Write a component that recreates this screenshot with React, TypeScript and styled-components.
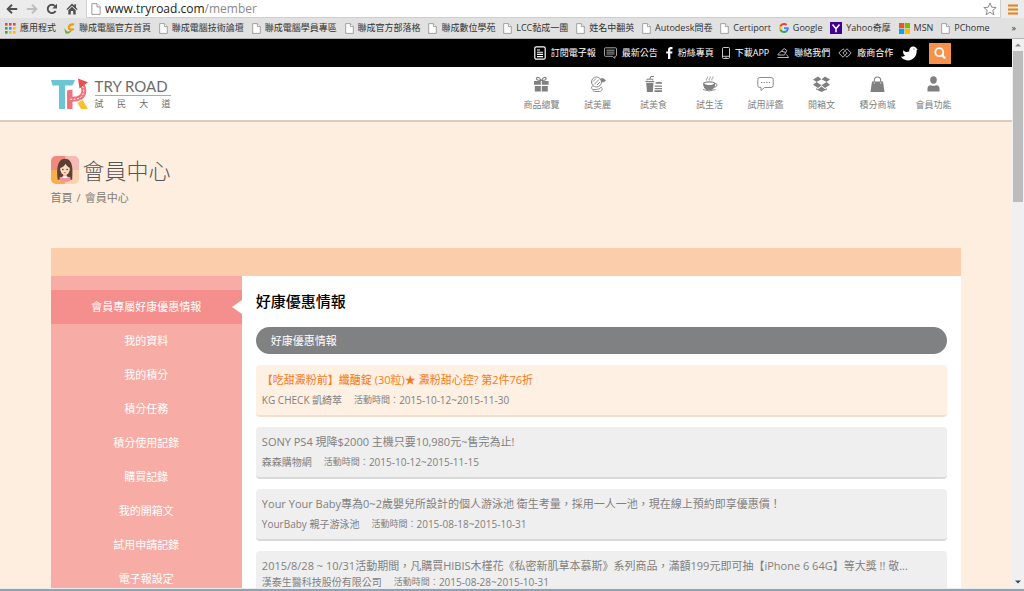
import React from "react";
import styled, { createGlobalStyle } from "styled-components";

const GlobalStyle = createGlobalStyle`
  * { box-sizing: border-box; }
  html, body { margin: 0; padding: 0; }
  body {
    font-family: "Open Sans", "Noto Sans CJK TC", sans-serif;
    background: #fff;
    color: #7f7f7f;
  }
  a { color: inherit; text-decoration: none; }
  ul { list-style: none; margin: 0; padding: 0; }
  button { border: 0; padding: 0; background: none; font: inherit; color: inherit; }
  svg { display: block; flex: none; }
`;

const Window = styled.div`
  display: flex;
  flex-direction: column;
  height: 100vh;
  overflow: hidden;
`;

/* ---------- browser chrome ---------- */

const Toolbar = styled.div`
  display: flex;
  flex: none;
  height: 18px;
  background: #ececec;
`;

const NavButtons = styled.div`
  display: flex;
  align-items: center;
  gap: 8px;
  padding: 0 8px 1px 6px;
`;

const AddressBar = styled.form`
  display: flex;
  align-items: center;
  flex: 1;
  gap: 4px;
  padding: 0 3px 0 4px;
  background: #fff;
  border: 1px solid #cfcfcf;
  border-top: 0;
`;

const AddressText = styled.label`
  position: relative;
  flex: 1;
  height: 17px;
  font-size: 12px;
  line-height: 17px;
  color: #8a8a8a;
`;

const AddressInput = styled.input`
  position: absolute;
  inset: 0;
  width: 100%;
  padding: 0;
  border: 0;
  outline: 0;
  background: transparent;
  color: transparent;
  font: inherit;
`;

const Host = styled.span`
  color: #222;
`;

const MenuButton = styled.button`
  width: 23px;
  display: flex;
  align-items: center;
  justify-content: center;
`;

const Bookmarks = styled.nav`
  display: flex;
  flex: none;
  align-items: center;
  justify-content: space-between;
  height: 21px;
  padding: 0 8px 0 5px;
  background: #e1e1e1;
  border-bottom: 1px solid #b5b5b5;
  overflow: hidden;
`;

const Bookmark = styled.a`
  display: flex;
  align-items: center;
  gap: 4px;
  font-size: 9px;
  line-height: 20px;
  white-space: nowrap;
  color: #333;
`;

const MoreBookmarks = styled.button`
  margin-left: 14px;
  font-size: 9px;
  line-height: 20px;
  color: #333;
`;

/* ---------- page frame ---------- */

const Viewport = styled.div`
  display: flex;
  flex: 1;
  min-height: 0;
`;

const Page = styled.div`
  flex: 1;
  min-width: 0;
  overflow: hidden;
  background: #feeee0;
`;

const Scrollbar = styled.div`
  display: flex;
  flex-direction: column;
  align-items: center;
  justify-content: space-between;
  width: 12px;
  padding: 4px 0;
  background: #f0f0f0;
`;

const Thumb = styled.div`
  width: 10px;
  height: 28%;
  margin: 4px 0 auto;
  background: #bcbcbc;
`;

const Taskbar = styled.div`
  flex: none;
  height: 3px;
  border-top: 1px solid #e8ecef;
  background: #8fa3b4;
`;

/* ---------- site header ---------- */

const UtilityBar = styled.nav`
  display: flex;
  align-items: center;
  justify-content: flex-end;
  gap: 8px;
  height: 28px;
  padding: 0 6%;
  background: #000;
  color: #fff;
`;

const UtilityLink = styled.a`
  display: flex;
  align-items: center;
  gap: 5px;
  font-size: 9px;
  line-height: 12px;
  white-space: nowrap;
`;

const SearchButton = styled.button`
  display: flex;
  align-items: center;
  justify-content: center;
  width: 22px;
  height: 21px;
  margin-left: 3px;
  background: #f8914a;
`;

const SiteHeader = styled.header`
  display: flex;
  align-items: center;
  justify-content: space-between;
  height: 55px;
  padding: 0 5%;
  background: #fff;
  border-bottom: 2px solid #d8cdc3;
`;

const Brand = styled.a`
  display: flex;
  align-items: center;
  gap: 6px;
`;

const BrandText = styled.span`
  display: flex;
  flex-direction: column;
  width: 76px;
`;

const BrandName = styled.span`
  font-family: Lato, sans-serif;
  font-size: 15px;
  line-height: 18px;
  color: #6c6c6c;
  white-space: nowrap;
  border-bottom: 1px solid #aaa;
`;

const BrandSub = styled.span`
  display: flex;
  justify-content: space-between;
  padding-top: 2px;
  font-size: 9px;
  line-height: 12px;
  color: #6c6c6c;
`;

const MainNav = styled.nav`
  display: flex;
`;

const MainNavLink = styled.a`
  display: flex;
  flex-direction: column;
  align-items: center;
  gap: 5px;
  width: 56px;
  font-size: 9px;
  line-height: 14px;
  white-space: nowrap;
  color: #808080;
`;

/* ---------- member centre ---------- */

const Content = styled.main`
  padding: 32px 5% 0;
`;

const TitleRow = styled.div`
  display: flex;
  align-items: center;
  gap: 4px;
`;

const PageTitle = styled.h1`
  margin: 0;
  font-size: 22px;
  font-weight: 300;
  line-height: 32px;
  color: #555;
`;

const Breadcrumb = styled.nav`
  display: flex;
  gap: 4px;
  margin: 3px 0 41px;
  font-size: 11px;
  line-height: 18px;
  color: #857c74;
`;

const Band = styled.div`
  height: 28px;
  background: #fccdab;
`;

const Columns = styled.div`
  display: flex;
  background: #fff;
`;

const SideMenu = styled.nav`
  flex: none;
  width: 21%;
  padding: 14px 0;
  background: #f8aca6;
`;

const SideLink = styled.a<{ $active?: boolean }>`
  display: block;
  position: relative;
  font-size: 11px;
  line-height: 34px;
  text-align: center;
  color: #fff;
  background: ${(p) => (p.$active ? "#f58f8d" : "transparent")};

  &::after {
    content: "";
    display: ${(p) => (p.$active ? "block" : "none")};
    position: absolute;
    right: 0;
    top: 10px;
    border: 7px solid transparent;
    border-left-width: 0;
    border-right: 10px solid #fff;
  }
`;

const Panel = styled.section`
  flex: 1;
  min-width: 0;
  padding: 14px;
`;

const PanelTitle = styled.h2`
  margin: 0 0 14px;
  font-size: 15px;
  font-weight: 500;
  line-height: 23px;
  color: #000;
`;

const Pill = styled.h3`
  margin: 0 0 11px;
  padding: 0 15px;
  border-radius: 14px;
  background: #808183;
  color: #fff;
  font-size: 11px;
  font-weight: 400;
  line-height: 27px;
`;

const Offers = styled.ul`
  display: flex;
  flex-direction: column;
  gap: 10px;
`;

const Offer = styled.li<{ $highlight?: boolean }>`
  height: 52px;
  padding: 5px 6px;
  border-radius: 4px;
  background: ${(p) => (p.$highlight ? "#fef0e3" : "#efefef")};
  border-bottom: 2px solid ${(p) => (p.$highlight ? "#f6dfc9" : "#d9d9d9")};
`;

const OfferTitle = styled.a<{ $highlight?: boolean }>`
  display: block;
  overflow: hidden;
  font-size: 11px;
  line-height: 20px;
  white-space: nowrap;
  text-overflow: ellipsis;
  color: ${(p) => (p.$highlight ? "#f47a20" : "#808080")};
`;

const OfferMeta = styled.div<{ $tight?: boolean }>`
  display: flex;
  align-items: center;
  gap: 12px;
  font-size: 10px;
  line-height: ${(p) => (p.$tight ? 12 : 20)}px;
  color: #808080;
`;

const Period = styled.span`
  display: flex;
`;

const PeriodLabel = styled.span`
  font-size: 9px;
`;

/* ---------- drawings ---------- */

const PageIcon = ({ size = 11 }: { size?: number }) => (
  <svg width={size - 2} height={size} viewBox="0 0 9 11" fill="#fff" stroke="#999" strokeWidth="0.9">
    <path d="M.7.6h4.8l2.8 2.8v7H.7z" />
    <path d="M5.4.6v3h2.9" />
  </svg>
);

const AppsIcon = () => (
  <svg width="11" height="11" viewBox="0 0 11 11">
    {["#e8453c", "#e8453c", "#e8453c", "#34a853", "#4285f4", "#fbbc05", "#34a853", "#fbbc05", "#fbbc05"].map((c, i) => (
      <rect key={i} x={(i % 3) * 4} y={Math.floor(i / 3) * 4} width="2.6" height="2.6" fill={c} />
    ))}
  </svg>
);

const LccIcon = () => (
  <svg width="11" height="11" viewBox="0 0 11 11" fill="none">
    <path d="M10 1.600C7 .6 4.600 2.500 4.900 5c.3 2 3 2.200 4.900.8" stroke="#f59b00" strokeWidth="2.200" />
    <path d="M.2 5l2.600 3.200c2 .6 4-.2 5.200-1.200C7 9.800 4.500 11 1.500 10.600z" fill="#63b32e" />
  </svg>
);

const GoogleIcon = () => (
  <svg width="10" height="10" viewBox="0 0 48 48">
    <path fill="#EA4335" d="M24 9.500c3.540 0 6.710 1.220 9.210 3.600l6.850-6.850C35.900 2.380 30.470 0 24 0 14.620 0 6.510 5.380 2.560 13.220l7.980 6.190C12.430 13.720 17.740 9.500 24 9.500z" />
    <path fill="#4285F4" d="M46.980 24.550c0-1.570-.15-3.090-.38-4.550H24v9.020h12.940c-.58 2.960-2.260 5.480-4.780 7.180l7.730 6c4.510-4.180 7.090-10.360 7.090-17.650z" />
    <path fill="#FBBC05" d="M10.530 28.590A14.500 14.500 0 0 1 9.770 24c0-1.600.27-3.140.76-4.590l-7.980-6.190A23.900 23.900 0 0 0 0 24c0 3.880.92 7.540 2.560 10.780z" />
    <path fill="#34A853" d="M24 48c6.480 0 11.930-2.130 15.890-5.810l-7.730-6c-2.150 1.450-4.920 2.300-8.160 2.300-6.260 0-11.570-4.220-13.470-9.910l-7.980 6.190C6.510 42.620 14.620 48 24 48z" />
  </svg>
);

const YahooIcon = () => (
  <svg width="12" height="12" viewBox="0 0 12 12">
    <rect width="12" height="12" fill="#400090" />
    <path d="M2.500 2.500L6 6.800l3.500-4.300M6 6.500v3.700" stroke="#fff" strokeWidth="1.500" fill="none" />
  </svg>
);

const MsnIcon = () => (
  <svg width="11" height="11" viewBox="0 0 11 11">
    <path d="M0 0h5.200v5.200H0z" fill="#f25022" />
    <path d="M5.800 0H11v5.200H5.800z" fill="#7fba00" />
    <path d="M0 5.800h5.200V11H0z" fill="#00a4ef" />
    <path d="M5.800 5.800H11V11H5.800z" fill="#ffb900" />
  </svg>
);

const Arrow = ({ color, flip }: { color: string; flip?: boolean }) => (
  <svg width="12" height="12" viewBox="0 0 12 12" fill="none" stroke={color} strokeWidth="1.900">
    <path d={flip ? "M.8 6h9M6 1.800L10.300 6 6 10.200" : "M11.200 6h-9M6 1.800L1.700 6 6 10.200"} />
  </svg>
);

const ReloadIcon = () => (
  <svg width="12" height="12" viewBox="0 0 12 12">
    <path d="M9.600 8A4.200 4.200 0 1 1 9 3" fill="none" stroke="#505050" strokeWidth="1.900" />
    <path d="M11 .8v4.700H6.300z" fill="#505050" />
  </svg>
);

const HomeIcon = () => (
  <svg width="12" height="12" viewBox="0 0 12 12" fill="#505050">
    <path d="M6 .5L.4 6.200l1 .9L6 2.700l4.600 4.400 1-.9L10 4.500V1.300H8.300v1.500z" />
    <path d="M2.300 7.200L6 3.700l3.700 3.500V11.500H7.200V8H4.800v3.500H2.300z" />
  </svg>
);

const StarIcon = () => (
  <svg width="14" height="14" viewBox="0 0 14 14" fill="#fff" stroke="#8a8a8a" strokeWidth="1">
    <path d="M7 1l1.700 4.200 4.500.3-3.500 2.900 1.200 4.400L7 10.300l-3.900 2.500 1.200-4.400L.8 5.500l4.500-.3z" />
  </svg>
);

const MenuIcon = () => (
  <svg width="10" height="11" viewBox="0 0 10 11" fill="#ea8010">
    <path d="M0 .5h10v2H0zM0 4.500h10v2H0zM0 8.500h10v2H0z" />
  </svg>
);

const ScrollArrow = ({ down }: { down?: boolean }) => (
  <svg width="6" height="4" viewBox="0 0 6 4" fill={down ? "#444" : "#888"}>
    <path d={down ? "M0 .5h6L3 3.500z" : "M0 3.500h6L3 .5z"} />
  </svg>
);

const NewsIcon = () => (
  <svg width="12" height="14" viewBox="0 0 12 14" fill="none" stroke="#fff">
    <rect x=".8" y=".8" width="10.400" height="12.400" rx="1.500" strokeWidth="1.200" />
    <path d="M3 4h3M3 6.200h6M3 8.400h6M3 10.600h6" strokeWidth="1.100" />
  </svg>
);

const NoticeIcon = () => (
  <svg width="13" height="12" viewBox="0 0 13 12" fill="none" stroke="#b5b5b5" strokeWidth=".9">
    <path d="M1.500.8h10q1 0 1 1v6.500q0 1-1 1h-.6v2L8.300 9.300H1.500q-1 0-1-1V1.800q0-1 1-1z" />
    <path d="M2.500 3.200h8M2.500 5.100h8M2.500 7h8" />
  </svg>
);

const FacebookIcon = () => (
  <svg width="7" height="12" viewBox="0 0 7 12" fill="#fff">
    <path d="M2 12V6.600H.2V4.400H2V3C2 1.100 3.100.1 4.800.1c.9 0 1.700.1 1.700.1v2H5.300c-.9 0-1 .4-1 1v1.200h2.200l-.3 2.200H4.300V12z" />
  </svg>
);

const PhoneIcon = () => (
  <svg width="8" height="12" viewBox="0 0 8 12" fill="none" stroke="#ddd" strokeWidth=".9">
    <rect x=".5" y=".5" width="7" height="11" rx="1" />
    <path d="M.5 9.300h7M3.500 10.400h1" />
  </svg>
);

const ContactIcon = () => (
  <svg width="12" height="12" viewBox="0 0 12 12" fill="none" stroke="#ccc" strokeWidth=".9">
    <path d="M.8 7.500L7.200 1.500l2.600 2L7.500 8H1zM4.500 4.200l4.300 1.300M.5 10.500h11.200L9.500 7.500" />
  </svg>
);

const PartnerIcon = () => (
  <svg width="14" height="10" viewBox="0 0 14 10" fill="none" stroke="#ccc" strokeWidth=".9">
    <path d="M6.500 2.200L5 .8.8 5 5 9.200 9.200 5 7.500 3.300M7.500 7.800L9 9.200 13.200 5 9 .8 4.800 5l1.700 1.700" />
  </svg>
);

const BirdIcon = () => (
  <svg width="17" height="15" viewBox="0 0 17 15" fill="#fff">
    <path d="M0 10.600c2 .3 3.300-.2 4-1C2.500 8.500 1.700 6.500 2.200 4.200c1.600 1.900 3.800 2.100 6 1.400C8 2.400 10 .4 12.500.6c1.500.1 2.500.9 3 2l1.300.6-1.200.8c.6 5.500-3 10.400-8.600 10.400-3.300 0-5.800-1.300-7-3.800z" />
    <circle cx="13" cy="3" r=".5" fill="#000" />
  </svg>
);

const SearchIcon = () => (
  <svg width="12" height="12" viewBox="0 0 12 12" fill="none" stroke="#fff">
    <circle cx="5.300" cy="5.200" r="4" strokeWidth="1.800" />
    <path d="M8 8l3.200 3.400" strokeWidth="2.200" />
  </svg>
);

const LogoMark = () => (
  <svg width="38" height="32" viewBox="0 0 38 32">
    <path d="M0 2h24l-2.500 5.500H14V31H8V7.500H1.500z" fill="#6cc5d5" />
    <path d="M16 12.500l5.500-1V31H16z" fill="#f1727f" />
    <path d="M18 21c9 1 14.800-1.500 14.800-8.500 0-2.500-.8-4-1.800-5.500" fill="none" stroke="#f1727f" strokeWidth="5" />
    <path d="M27 .5l10 3.800-8.500 6.200z" fill="#e9504e" />
    <path d="M19 21.200c8 .8 13.700-1.700 13.700-8.700 0-2-.7-3.700-1.700-5" fill="none" stroke="#fff" strokeWidth="1" strokeDasharray="2 1.500" />
    <path d="M26.500 25l5-3.200 5.500 9.200h-7z" fill="#fbc02d" />
  </svg>
);

const Avatar = () => (
  <svg width="28" height="28" viewBox="0 0 29 29">
    <defs>
      <clipPath id="avatar-frame">
        <rect width="29" height="29" rx="5" />
      </clipPath>
    </defs>
    <g clipPath="url(#avatar-frame)">
      <path d="M0 0h14.500v14.500H0z" fill="#f08a80" />
      <path d="M14.500 0H29v14.500H14.500z" fill="#f6b9b5" />
      <path d="M0 14.500h14.500V29H0z" fill="#f5b04a" />
      <path d="M14.500 14.500H29V29H14.500z" fill="#fbd3b0" />
      <path d="M7 24.500C6 16 5.500 3 14.500 2.800S22.500 16 22 24.500z" fill="#5b4034" />
      <path d="M12.700 17h3.600v5h-3.600z" fill="#f4c9a4" />
      <ellipse cx="14.500" cy="13.500" rx="5" ry="6" fill="#fbdcbf" />
      <path d="M9 12.500c0-5 2.500-7 5.500-7s5.500 2 5.500 7c-2.500-1-4-2.500-5-4.500-1 2.200-3 3.700-6 4.500z" fill="#5b4034" />
      <circle cx="12.300" cy="14" r=".8" fill="#3c2a22" />
      <circle cx="16.700" cy="14" r=".8" fill="#3c2a22" />
      <path d="M13.300 17q1.200.9 2.400 0" stroke="#e0605e" strokeWidth=".8" fill="none" />
      <path d="M8.500 25.500q2-5 6-4.500 4-.5 6 4.500z" fill="#fff" />
      <path d="M9 21.500l5.500 1.500 5.500-1.500V26l-5.500 1.300L9 26z" fill="#f58fa2" />
    </g>
  </svg>
);

const NavArt: Record<string, React.ReactNode> = {
  gift: (
    <g fill="#808080">
      <path d="M1 5h6.800v3.800H1zM8.800 5h6.800v3.800H8.800zM1.800 10h6v5.500h-6zM8.800 10h6v5.500h-6z" />
      <path d="M7.800 4.300C4.300 4.500 2.800 3.300 3.600 2s3.200-.8 4.200 2.300zM8.800 4.300c3.500.2 5-1 4.200-2.300S9.800 1.200 8.800 4.300z" fill="none" stroke="#808080" strokeWidth="1.200" />
    </g>
  ),
  beauty: (
    <g fill="none" stroke="#808080" strokeWidth=".9">
      <circle cx="7.500" cy="6" r="5" />
      <path d="M4 5.500l3-3M5 8.500l5-5M4 9.500c-2.500 1.500-1.500 4 .5 4M8 9l3-3" />
      <path d="M11.500 3c1.500-.8 4-.3 4.800 1.500-1 1.500-2.800 1.800-4.300 1" fill="#808080" />
      <path d="M4.500 13.500c-1 1 0 2 1 2h5c3 0 3.500-3.500 1.500-4.500-1 2-3 2.700-7.500 2.500z" />
    </g>
  ),
  food: (
    <g fill="#808080">
      <path d="M.5 5h8.700v1.200H.5zM1.200 7h7.300l-.7 9H2z" />
      <path d="M2 4.500V3.200h5.800v1.300M5 3l.8-2.500H9" fill="none" stroke="#808080" />
      <path d="M10.500 6.500q3.500-1.500 6.500 0v1.300h-6.500zM9.700 9.500h7.300v1.200H9.700zM9.700 12h7.300v1.200H9.700zM9.500 14.300H17V16H9.500z" />
    </g>
  ),
  life: (
    <g fill="none" stroke="#808080">
      <path d="M5.500 4.500q-.5-1 .5-2t.5-2M8.200 4.500q-.5-1 .5-2t.5-2M10.900 4.500q-.5-1 .5-2t.5-2" strokeWidth=".8" />
      <ellipse cx="8.200" cy="7.800" rx="5.500" ry="2" strokeWidth="1.200" />
      <path d="M2.700 8.500q.5 5.500 5.500 5.500 4.800 0 5.500-5.500-5.500 3-11 0z" fill="#808080" />
      <path d="M13.500 7.500q2.500-.5 2.500 1.500t-3.500 2.500M2 13.500q6 3 12.500 0" strokeWidth=".9" />
    </g>
  ),
  review: (
    <g fill="none" stroke="#808080" strokeWidth=".9">
      <path d="M2.800 1.500h11.400q2 0 2 2v6q0 2-2 2H7.500L4 14.500v-3H2.800q-2 0-2-2v-6q0-2 2-2z" />
      <path d="M4 6.500h1.200M6.600 6.500h1.200M9.200 6.500h1.200M11.800 6.500H13" strokeWidth="1.200" />
    </g>
  ),
  box: (
    <g fill="#808080">
      <path d="M5 .5l3.500 2.700L3.500 6 0 3.500zM12 .5L8.500 3.200l5 2.800L17 3.500zM0 8.700L3.500 6l5 3.200-3.500 2.700zM17 8.700L13.500 6l-5 3.200 3.500 2.700zM3.200 12l1.800 1.200 3.500-2.700 3.500 2.700 1.800-1.200v1.400L8.500 16l-5.300-2.600z" />
      <path d="M8.500 3.800L12.300 6 8.500 8.500 4.700 6z" fill="#fff" />
    </g>
  ),
  bag: (
    <g fill="#808080">
      <path d="M3 5.500h11l1.500 10.500h-14z" />
      <path d="M5.300 7V4.500q0-3.500 3.200-3.500t3.200 3.500V7" fill="none" stroke="#808080" strokeWidth="1.100" />
      <path d="M4.800 7h1M11.200 7h1" stroke="#fff" />
    </g>
  ),
  user: (
    <g fill="#808080">
      <ellipse cx="8.500" cy="4" rx="3.300" ry="3.700" />
      <path d="M2.500 15.500V12.500q0-3 3.200-3.300 2.800 1.200 5.600 0 3.200.3 3.200 3.300v3z" />
    </g>
  ),
};

/* ---------- data ---------- */

const bookmarks: { label: string; icon?: React.ReactNode }[] = [
  { label: "應用程式", icon: <AppsIcon /> },
  { label: "聯成電腦官方首頁", icon: <LccIcon /> },
  { label: "聯成電腦技術論壇" },
  { label: "聯成電腦學員專區" },
  { label: "聯成官方部落格" },
  { label: "聯成數位學苑" },
  { label: "LCC黏成一團" },
  { label: "姓名中翻英" },
  { label: "Autodesk問卷" },
  { label: "Certiport" },
  { label: "Google", icon: <GoogleIcon /> },
  { label: "Yahoo奇摩", icon: <YahooIcon /> },
  { label: "MSN", icon: <MsnIcon /> },
  { label: "PChome" },
];

const utilities = [
  { label: "訂閱電子報", icon: <NewsIcon /> },
  { label: "最新公告", icon: <NoticeIcon /> },
  { label: "粉絲專頁", icon: <FacebookIcon /> },
  { label: "下載APP", icon: <PhoneIcon /> },
  { label: "聯絡我們", icon: <ContactIcon /> },
  { label: "廠商合作", icon: <PartnerIcon /> },
];

const sections = [
  ["商品總覽", "gift"],
  ["試美麗", "beauty"],
  ["試美食", "food"],
  ["試生活", "life"],
  ["試用評鑑", "review"],
  ["開箱文", "box"],
  ["積分商城", "bag"],
  ["會員功能", "user"],
];

const menu = [
  "會員專屬好康優惠情報",
  "我的資料",
  "我的積分",
  "積分任務",
  "積分使用記錄",
  "購買記錄",
  "我的開箱文",
  "試用申請記錄",
  "電子報設定",
];

const offers = [
  { title: "【吃甜澱粉前】纖醣錠 (30粒)★ 澱粉甜心控? 第2件76折", shop: "KG CHECK 凱綺萃", period: "2015-10-12~2015-11-30", highlight: true },
  { title: "SONY PS4 現降$2000 主機只要10,980元~售完為止!", shop: "森森購物網", period: "2015-10-12~2015-11-15" },
  { title: "Your Your Baby專為0~2歲嬰兒所設計的個人游泳池 衛生考量，採用一人一池，現在線上預約即享優惠價！", shop: "YourBaby 親子游泳池", period: "2015-08-18~2015-10-31" },
  { title: "2015/8/28 ~ 10/31活動期間，凡購買HIBIS木槿花《私密新肌草本慕斯》系列商品，滿額199元即可抽【iPhone 6 64G】等大獎 !! 敬...", shop: "漢泰生醫科技股份有限公司", period: "2015-08-28~2015-10-31", tight: true },
];

export default function App() {
  return (
    <Window lang="zh-Hant">
      <GlobalStyle />
      <Toolbar>
        <NavButtons>
          <button aria-label="上一頁"><Arrow color="#505050" /></button>
          <button aria-label="下一頁"><Arrow color="#bdbdbd" flip /></button>
          <button aria-label="重新載入"><ReloadIcon /></button>
          <button aria-label="首頁"><HomeIcon /></button>
        </NavButtons>
        <AddressBar>
          <PageIcon size={12} />
          <AddressText>
            <Host>www.tryroad.com</Host>/member
            <AddressInput type="text" aria-label="網址" />
          </AddressText>
          <button type="button" aria-label="加入書籤"><StarIcon /></button>
        </AddressBar>
        <MenuButton aria-label="選單"><MenuIcon /></MenuButton>
      </Toolbar>
      <Bookmarks>
        {bookmarks.map((b) => (
          <Bookmark href="#" key={b.label}>
            {b.icon ?? <PageIcon />}
            {b.label}
          </Bookmark>
        ))}
        <MoreBookmarks aria-label="更多書籤">»</MoreBookmarks>
      </Bookmarks>

      <Viewport>
        <Page>
          <UtilityBar>
            {utilities.map((u) => (
              <UtilityLink href="#" key={u.label}>
                {u.icon}
                {u.label}
              </UtilityLink>
            ))}
            <UtilityLink href="#" aria-label="Twitter"><BirdIcon /></UtilityLink>
            <SearchButton aria-label="搜尋"><SearchIcon /></SearchButton>
          </UtilityBar>
          <SiteHeader>
            <Brand href="#">
              <LogoMark />
              <BrandText>
                <BrandName>TRY ROAD</BrandName>
                <BrandSub>
                  <span>試</span>
                  <span>民</span>
                  <span>大</span>
                  <span>道</span>
                </BrandSub>
              </BrandText>
            </Brand>
            <MainNav>
              {sections.map(([label, art]) => (
                <MainNavLink href="#" key={label}>
                  <svg width="17" height="17" viewBox="0 0 17 17">{NavArt[art]}</svg>
                  {label}
                </MainNavLink>
              ))}
            </MainNav>
          </SiteHeader>

          <Content>
            <TitleRow>
              <Avatar />
              <PageTitle>會員中心</PageTitle>
            </TitleRow>
            <Breadcrumb>
              <a href="#">首頁</a>
              <span>/</span>
              <a href="#">會員中心</a>
            </Breadcrumb>
            <Band />
            <Columns>
              <SideMenu>
                {menu.map((label, i) => (
                  <SideLink href="#" key={label} $active={i === 0}>{label}</SideLink>
                ))}
              </SideMenu>
              <Panel>
                <PanelTitle>好康優惠情報</PanelTitle>
                <Pill>好康優惠情報</Pill>
                <Offers>
                  {offers.map((o) => (
                    <Offer key={o.title} $highlight={o.highlight}>
                      <OfferTitle href="#" $highlight={o.highlight}>{o.title}</OfferTitle>
                      <OfferMeta $tight={o.tight}>
                        <span>{o.shop}</span>
                        <Period>
                          <PeriodLabel>活動時間：</PeriodLabel>
                          {o.period}
                        </Period>
                      </OfferMeta>
                    </Offer>
                  ))}
                </Offers>
              </Panel>
            </Columns>
          </Content>
        </Page>
        <Scrollbar>
          <ScrollArrow />
          <Thumb />
          <ScrollArrow down />
        </Scrollbar>
      </Viewport>
      <Taskbar />
    </Window>
  );
}
